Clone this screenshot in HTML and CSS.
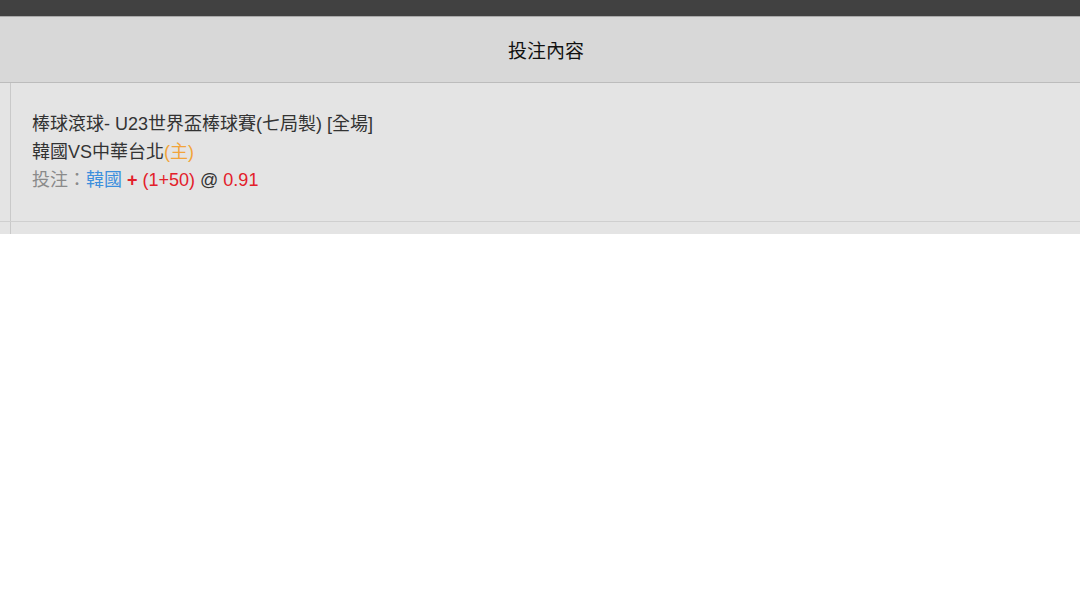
FILE: index.html
```html
<!DOCTYPE html>
<html lang="zh-Hant">
<head>
<meta charset="utf-8">
<title>投注內容</title>
<link rel="stylesheet" href="styles.css">
</head>
<body>
<div class="topbar"></div>
<div class="table">
  <div class="head">
    <div class="side"></div>
    <div class="title">投注內容</div>
  </div>
  <div class="row">
    <div class="side bordered"></div>
    <div class="content">
      <div class="line">棒球滾球- U23世界盃棒球賽(七局製) [全場]</div>
      <div class="line">韓國VS中華台北<span class="home">(主)</span></div>
      <div class="line"><span class="muted">投注：</span><span class="team">韓國</span> <span class="red"><b class="sign">+</b> (1+50)</span> @ <span class="red">0.91</span></div>
    </div>
  </div>
  <div class="row short">
    <div class="side bordered"></div>
    <div class="content"></div>
  </div>
</div>
</body>
</html>
```
FILE: styles.css
```css
html, body {
  margin: 0;
  padding: 0;
  background: #ffffff;
}
body {
  font-family: "Liberation Sans", Arial, "Noto Sans CJK TC", sans-serif;
  color: #333333;
}
.topbar {
  height: 16px;
  background: #414141;
  border-bottom: 1px solid #a9a9a9;
}
.table {
  display: flex;
  flex-direction: column;
}
.head {
  display: flex;
  height: 65px;
  background: #d8d8d8;
  border-bottom: 1px solid #bcbcbc;
}
.side {
  width: 10px;
  flex: none;
}
.bordered {
  border-right: 1px solid #c9c9c9;
}
.title {
  flex: 1;
  display: flex;
  align-items: center;
  justify-content: center;
  font-family: "Noto Sans CJK TC", sans-serif;
  font-size: 19px;
  font-weight: 400;
  color: #111111;
  padding-left: 2px;
}
.row {
  display: flex;
  background: #e4e4e4;
  border-bottom: 1px solid #cfcfcf;
}
.row.short {
  height: 12px;
  border-bottom: none;
}
.content {
  flex: 1;
  padding: 27px 0 27px 21px;
  font-size: 18px;
  line-height: 28px;
}
.row.short .content {
  padding: 0;
}
.home {
  color: #f2a43a;
}
.muted {
  color: #8a8a8a;
}
.team {
  color: #3d8fdd;
}
.red {
  color: #e3202a;
}
.sign {
  font-weight: 700;
}
```
